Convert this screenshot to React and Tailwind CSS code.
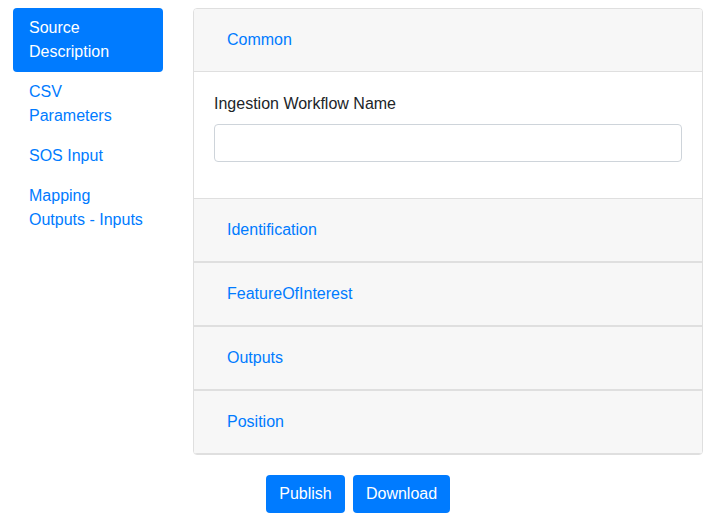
export default function App() {
  const font = { fontFamily: '"Liberation Sans", Arial, sans-serif' };
  const navItems = [
    ["Source", "Description"],
    ["CSV", "Parameters"],
    ["SOS Input"],
    ["Mapping", "Outputs - Inputs"],
  ];
  const sections = ["Identification", "FeatureOfInterest", "Outputs", "Position"];
  return (
    <div className="w-[720px] h-[527px] bg-white text-[16px] leading-6 text-[#212529]" style={font}>
      <div className="flex pl-[13px] pt-2 gap-[30px]">
        <div className="w-[150px] flex flex-col">
          {navItems.map((lines, i) => (
            <div
              key={i}
              className={
                "px-4 py-2 rounded " +
                (i === 0 ? "bg-[#007bff] text-white" : "text-[#007bff]")
              }
            >
              {lines.map((l, j) => (
                <div key={j}>{l}</div>
              ))}
            </div>
          ))}
        </div>
        <div className="w-[510px] flex flex-col">
          <div className="border border-[#dfdfdf] rounded overflow-hidden">
            <div className="bg-[#f7f7f7] border-b border-[#dfdfdf] px-5 py-3">
              <div className="pl-[13px] pr-3 py-[7px] text-[#007bff]">Common</div>
            </div>
            <div className="p-5 bg-white">
              <div className="mb-2">Ingestion Workflow Name</div>
              <div className="h-[38px] border border-[#ced4da] rounded mb-4 bg-white"></div>
            </div>
            {sections.map((s) => (
              <div key={s} className="border-t border-[#dfdfdf]">
                <div className="bg-[#f7f7f7] px-5 py-3 border-b border-[#dfdfdf]">
                  <div className="pl-[13px] pr-3 py-[7px] text-[#007bff]">{s}</div>
                </div>
              </div>
            ))}
          </div>
          <div className="flex gap-2 mt-[20px] ml-[73px]">
            <div className="h-[38px] w-[79px] justify-center flex items-center rounded bg-[#007bff] text-white">Publish</div>
            <div className="h-[38px] w-[97px] justify-center flex items-center rounded bg-[#007bff] text-white">Download</div>
          </div>
        </div>
      </div>
    </div>
  );
}
